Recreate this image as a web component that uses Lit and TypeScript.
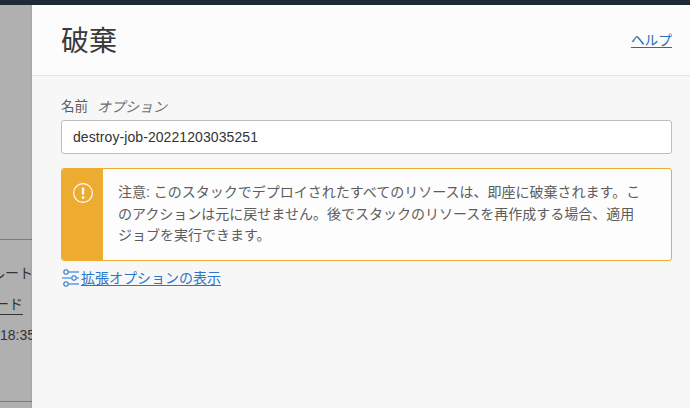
import { LitElement, html, css } from "lit";
import { customElement } from "lit/decorators.js";

@customElement("app-root")
export class AppRoot extends LitElement {
  static styles = css`
    :host {
      display: flex;
      flex-direction: column;
      width: 690px;
      height: 408px;
      overflow: hidden;
      font-family: "Liberation Sans", "Noto Sans CJK JP", sans-serif;
      color: #333;
    }
    .top { height: 5px; background: #1f2937; flex: none; }
    .main { display: flex; flex: 1; min-height: 0; }
    .side {
      width: 32px;
      flex: none;
      background: #b0b0b0;
      display: flex;
      flex-direction: column;
      overflow: hidden;
      font-size: 14px;
      color: #333;
    }
    .rule { height: 1px; background: #7c7c7c; flex: none; }
    .rule.a { margin-top: 234px; }
    .rule.b { margin-top: 56px; }
    .row { display: flex; height: 20px; line-height: 20px; white-space: nowrap; flex: none; }
    .row.end { justify-content: flex-end; }
    .r1 { margin-top: 23px; }
    .r1 span { margin-right: -1px; }
    .r2 { margin-top: 12px; padding-right: 9px; }
    .r2 span { border-bottom: 1px solid #333; line-height: 19px; height: 19px; }
    .r3 { margin-top: 10px; }
    .panel {
      flex: 1;
      min-width: 0;
      display: flex;
      flex-direction: column;
      background: #f7f7f7;
      box-shadow: -1px 0 2px rgba(0,0,0,.08);
    }
    header {
      height: 71px;
      flex: none;
      box-sizing: border-box;
      background: #fcfcfc;
      border-bottom: 1px solid #e4e4e4;
      display: flex;
      align-items: center;
      justify-content: space-between;
      padding: 0 18px 0 29px;
    }
    h1 { margin: 3px 0 0; font-size: 28px; font-weight: 400; line-height: 36px; color: #3a3a3a; }
    a { color: #2a76cc; text-decoration: underline; text-underline-offset: 2px; }
    .help { font-size: 13.7px; color: #2a6ab0; margin-bottom: 3px; }
    .body { display: flex; flex-direction: column; padding: 22px 18px 0 29px; }
    .label { font-size: 14px; line-height: 18px; height: 22px; color: #5c5c5c; display: flex; gap: 9px; }
    .label span { font-size: 13.5px; }
    .label i { font-style: italic; color: #6e6e6e; }
    .input {
      height: 34px;
      box-sizing: border-box;
      border: 1px solid #bdbdbd;
      border-radius: 3px;
      background: #fff;
      font-size: 14px;
      letter-spacing: .08px;
      line-height: 32px;
      padding: 0 11px;
      color: #333;
    }
    .alert {
      margin-top: 14px;
      height: 93px;
      box-sizing: border-box;
      display: flex;
      border: 1px solid #edab2f;
      border-radius: 3px;
      background: #fdfdfd;
      overflow: hidden;
    }
    .stripe {
      width: 41px;
      flex: none;
      background: #edab2f;
      display: flex;
      justify-content: center;
      align-items: flex-start;
      padding-top: 14px;
      box-sizing: border-box;
    }
    .msg {
      padding: 13px 30px 0 15px;
      font-size: 14px;
      line-height: 21.5px;
      color: #5c5c5c;
    }
    .adv { margin-top: 7px; display: flex; align-items: center; gap: 2px; font-size: 14px; line-height: 20px; }
    .adv svg { flex: none; }
  `;

  render() {
    return html`
      <div class="top"></div>
      <div class="main">
        <div class="side">
          <div class="rule a"></div>
          <div class="row end r1"><span>ルート</span></div>
          <div class="row end r2"><span>ード</span></div>
          <div class="row r3"><span>18:35</span></div>
          <div class="rule b"></div>
        </div>
        <div class="panel">
          <header>
            <h1>破棄</h1>
            <a class="help" href="#">ヘルプ</a>
          </header>
          <div class="body">
            <div class="label"><span>名前</span><i>オプション</i></div>
            <div class="input">destroy-job-20221203035251</div>
            <div class="alert">
              <div class="stripe">
                <svg width="20" height="20" viewBox="0 0 20 20" fill="none">
                  <circle cx="10" cy="10" r="9.4" stroke="#fff" stroke-width="1.2"></circle>
                  <path d="M10 4.5v7" stroke="#fff" stroke-width="2.4"></path>
                  <circle cx="10" cy="14.6" r="1.4" fill="#fff"></circle>
                </svg>
              </div>
              <div class="msg">注意: このスタックでデプロイされたすべてのリソースは、即座に破棄されます。このアクションは元に戻せません。後でスタックのリソースを再作成する場合、適用ジョブを実行できます。</div>
            </div>
            <div class="adv">
              <svg width="18" height="18" viewBox="0 0 18 18" fill="none" stroke="#2a78d0" stroke-width="1.1">
                <circle cx="5" cy="3" r="2.2"></circle>
                <path d="M8 3h10"></path>
                <circle cx="13" cy="9" r="2.2"></circle>
                <path d="M1 9h9M16 9h2"></path>
                <circle cx="5" cy="15" r="2.2"></circle>
                <path d="M8 15h10"></path>
              </svg>
              <a href="#">拡張オプションの表示</a>
            </div>
          </div>
        </div>
      </div>
    `;
  }
}
